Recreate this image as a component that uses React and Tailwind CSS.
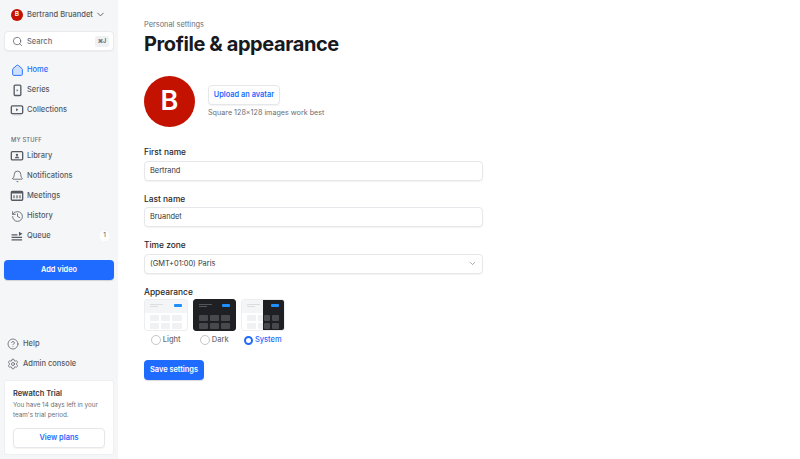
import React from "react";
import { Home, Search, Bell, History, Settings, CircleHelp, ChevronDown } from "lucide-react";

const FONT = { fontFamily: "Inter, sans-serif" };

function SeriesIcon() {
  return (
    <svg width="15" height="15" viewBox="0 0 18 18" fill="none">
      <rect x="5" y="2.5" width="8" height="12.5" rx="1.2" stroke="#565a62" strokeWidth="1.6" />
      <path d="M8 7.4l2 1.4-2 1.4z" fill="#565a62" />
    </svg>
  );
}

function CollectionsIcon() {
  return (
    <svg width="14" height="14" viewBox="0 0 18 18" fill="none">
      <rect x="1.7" y="3.6" width="14.6" height="10" rx="1.4" stroke="#565a62" strokeWidth="1.7" />
      <path d="M7.8 6.9l3 1.8-3 1.8z" fill="#565a62" />
      <path d="M3.5 15.2h11" stroke="#b9bcc2" strokeWidth="1.2" />
    </svg>
  );
}

function LibraryIcon() {
  return (
    <svg width="14" height="14" viewBox="0 0 18 18" fill="none">
      <rect x="1.7" y="3.4" width="14.6" height="10.6" rx="1.4" stroke="#565a62" strokeWidth="1.7" />
      <circle cx="9" cy="7.6" r="1.5" fill="#565a62" />
      <path d="M6.1 12c.4-1.6 1.5-2.2 2.9-2.2s2.5.6 2.9 2.2z" fill="#565a62" />
    </svg>
  );
}

function MeetingsIcon() {
  return (
    <svg width="14" height="14" viewBox="0 0 18 18" fill="none">
      <rect x="1.7" y="3" width="14.6" height="11.5" rx="1.2" stroke="#565a62" strokeWidth="1.7" />
      <rect x="2" y="3.2" width="14" height="2.6" fill="#565a62" />
      <path d="M3.8 8h2.7v4H3.8zM7.7 8h2.7v4H7.7zM11.5 8h2.7v4h-2.7z" fill="#9a9da3" />
    </svg>
  );
}

function QueueIcon() {
  return (
    <svg width="14" height="14" viewBox="0 0 18 18" fill="none">
      <path d="M2 7.5h7.5M2 10.8h13.5M2 14h13.5" stroke="#565a62" strokeWidth="1.6" />
      <path d="M11.5 3.4l4.5 2.8-4.5 2.8z" fill="#565a62" />
    </svg>
  );
}

function NavRow({ icon, label, active, badge }) {
  return (
    <div className="h-5 flex items-center pl-2 pr-[9px] shrink-0">
      <span className="w-[18px] h-[18px] flex items-center justify-center shrink-0">{icon}</span>
      <span className={`ml-[1px] text-[7.5px] font-medium ${active ? "text-[#1f6bff]" : "text-[#565a62]"}`}>{label}</span>
      {badge && (
        <span className="ml-auto w-[9px] h-[10px] bg-white rounded-sm flex items-center justify-center text-[6.5px] text-[#565a62]">{badge}</span>
      )}
    </div>
  );
}

function ThemeThumb({ mode }) {
  const dark = mode === "dark";
  const head = dark ? "bg-[#1f2023]" : "bg-[#f4f5f7]";
  const body = dark ? "bg-[#1f2023]" : "bg-white";
  const cell = dark ? "bg-[#48494d]" : "bg-[#f0f1f3]";
  const line = dark ? "bg-[#55565a]" : "bg-[#dcdde0]";

  if (mode === "system") {
    return (
      <div className="relative w-full h-[32px] rounded-[3px] overflow-hidden border border-[#eceef0] bg-white">
        <div className="h-[13px] bg-[#f4f5f7] px-[5px] pt-1">
          <div className="w-[13px] h-px bg-[#dcdde0]" />
          <div className="w-[8px] h-px mt-px bg-[#dcdde0]" />
        </div>
        <div className="grid grid-cols-3 gap-[2px] px-[5px] pt-[2px]">
          {[0, 1, 2, 3, 4, 5].map((i) => (
            <div key={i} className="h-[6px] rounded-[1px] bg-[#f0f1f3]" />
          ))}
        </div>
        <div className="absolute top-0 right-0 bottom-0 w-[21px] bg-[#1f2023]">
          <div className="absolute top-[4px] right-[5px] w-[8px] h-[3px] bg-[#1f8fff] rounded-[1px]" />
          <div className="grid grid-cols-2 gap-[2px] pl-[1px] pr-[5px] pt-[15px]">
            {[0, 1, 2, 3].map((i) => (
              <div key={i} className="h-[6px] rounded-[1px] bg-[#48494d]" />
            ))}
          </div>
        </div>
      </div>
    );
  }

  return (
    <div className={`relative w-full h-[32px] rounded-[3px] overflow-hidden border ${dark ? "border-[#1f2023]" : "border-[#eceef0]"} ${body}`}>
      <div className={`h-[13px] ${head} px-[5px] pt-1`}>
        <div className={`w-[13px] h-px ${line}`} />
        <div className={`w-[8px] h-px mt-px ${line}`} />
      </div>
      <div className="absolute top-[4px] right-[5px] w-[8px] h-[3px] bg-[#1f8fff] rounded-[1px]" />
      <div className="grid grid-cols-3 gap-[2px] px-[5px] pt-[2px]">
        {[0, 1, 2, 3, 4, 5].map((i) => (
          <div key={i} className={`h-[6px] rounded-[1px] ${cell}`} />
        ))}
      </div>
    </div>
  );
}

function ThemeOption({ mode, label, selected }) {
  return (
    <div className="w-[43.5px] flex flex-col items-center">
      <ThemeThumb mode={mode} />
      <div className="mt-[3px] h-[12px] flex items-center">
        {selected ? (
          <span className="w-[9px] h-[9px] rounded-full border-[2.5px] border-[#1f6bff] bg-white shrink-0" />
        ) : (
          <span className="w-[10px] h-[10px] rounded-full border border-[#c4c6ca] bg-white shrink-0" />
        )}
        <span className={`ml-[2px] text-[7.5px] font-medium ${selected ? "text-[#1f6bff]" : "text-[#6b6e75]"}`}>{label}</span>
      </div>
    </div>
  );
}

function Field({ label, value, select }) {
  return (
    <div className="mb-[13px]">
      <div className="h-[11px] flex items-center text-[8.4px] font-medium text-[#26282c] mb-[2.5px]">{label}</div>
      <div className="h-[20px] w-[339px] bg-white border border-[#e6e7ea] rounded-[4px] shadow-[0_1px_1px_rgba(0,0,0,0.05)] flex items-center px-[5px] text-[7.4px] text-[#33363b]">
        <span>{value}</span>
        {select && <ChevronDown size={9} className="ml-auto mr-[0px] text-[#8a8d93]" />}
      </div>
    </div>
  );
}

export default function App() {
  return (
    <div style={FONT} className="w-[800px] h-[459px] overflow-hidden flex bg-white">
      {/* Sidebar */}
      <div className="w-[118px] h-full bg-[#f5f6f8] flex flex-col shrink-0 px-[4px]">
        <div className="h-[29px] mb-[2px] shrink-0 flex items-center pl-[7px] pr-[8px]">
          <span className="w-3 h-3 rounded-full bg-[#c41200] text-white text-[6.5px] font-semibold flex items-center justify-center">B</span>
          <span className="ml-[4px] text-[7.5px] font-medium text-[#565a62] whitespace-nowrap">Bertrand Bruandet</span>
          <ChevronDown size={11} className="ml-auto text-[#565a62]" />
        </div>
        <div className="h-[20px] shrink-0 bg-white rounded-[4px] border border-[#e9eaed] shadow-[0_1px_1px_rgba(0,0,0,0.04)] flex items-center pl-[7px] pr-[4px]">
          <Search size={11} className="text-[#565a62]" strokeWidth={1.6} />
          <span className="ml-[4px] pt-px text-[7.5px] font-medium text-[#6b6e75]">Search</span>
          <span className="ml-auto w-[14px] h-[11px] rounded-[2px] bg-[#f0f1f3] text-[5.5px] font-semibold text-[#565a62] flex items-center justify-center">⌘J</span>
        </div>

        <div className="mt-[9px] -mx-[4px]">
          <NavRow active label="Home" icon={<Home size={13} strokeWidth={1.7} className="text-[#1f6bff]" fill="#cfe0ff" />} />
          <NavRow label="Series" icon={<SeriesIcon />} />
          <NavRow label="Collections" icon={<CollectionsIcon />} />
        </div>

        <div className="mt-[15px] pl-[7px] h-[10px] shrink-0 flex items-center text-[5.8px] font-medium tracking-[0.03em] text-[#6b6e75]">MY STUFF</div>
        <div className="mt-[1px] -mx-[4px]">
          <NavRow label="Library" icon={<LibraryIcon />} />
          <NavRow label="Notifications" icon={<Bell size={13} strokeWidth={1.5} className="text-[#565a62]" />} />
          <NavRow label="Meetings" icon={<MeetingsIcon />} />
          <NavRow label="History" icon={<History size={13} strokeWidth={1.5} className="text-[#565a62]" />} />
          <NavRow label="Queue" badge="1" icon={<QueueIcon />} />
        </div>

        <div className="mt-[14px] h-[20px] shrink-0 rounded-[4px] bg-[#1f6bff] shadow-[0_1px_1px_rgba(0,0,0,0.15)] flex items-center justify-center text-[7.4px] font-semibold text-white">Add video</div>

        <div className="mt-auto">
          <div className="flex items-center h-[20px] pl-[3px]">
            <CircleHelp size={12} strokeWidth={1.5} className="text-[#565a62]" />
            <span className="ml-[4px] text-[7.5px] font-medium text-[#565a62]">Help</span>
          </div>
          <div className="flex items-center h-[20px] pl-[3px]">
            <Settings size={12} strokeWidth={1.5} className="text-[#565a62]" />
            <span className="ml-[4px] text-[7.5px] font-medium text-[#565a62]">Admin console</span>
          </div>
          <div className="mt-[6px] mb-[4px] bg-white rounded-[3px] border border-[#eeeff1] px-[8px] pt-[7px] h-[75px]">
            <div className="text-[7.5px] font-semibold text-[#33363b] leading-[12px]">Rewatch Trial</div>
            <div className="text-[6.3px] text-[#6b6e75] leading-[10px]">You have 14 days left in your team's trial period.</div>
            <div className="mt-[8px] h-[20px] bg-white rounded-[4px] border border-[#e6e7ea] shadow-[0_1px_1px_rgba(0,0,0,0.05)] flex items-center justify-center text-[7.4px] font-semibold text-[#1f6bff]">View plans</div>
          </div>
        </div>
      </div>

      {/* Main */}
      <div className="flex-1 pl-[26px] pt-[19px]">
        <div className="text-[7.4px] text-[#6b6e75] leading-[12px]">Personal settings</div>
        <h1 className="mt-[1px] text-[20px] font-bold tracking-[-0.02em] text-[#17191d] leading-[24px]">Profile &amp; appearance</h1>

        <div className="mt-[20px] flex items-start">
          <div className="w-[51px] h-[51px] rounded-full bg-[#c41200] text-white text-[27px] font-semibold flex items-center justify-center">B</div>
          <div className="ml-[13px] mt-[9px]">
            <div className="h-[20px] w-[72px] bg-white rounded-[4px] border border-[#e6e7ea] shadow-[0_1px_1px_rgba(0,0,0,0.05)] flex items-center justify-center text-[7.4px] font-semibold text-[#1f6bff]">Upload an avatar</div>
            <div className="mt-[2px] text-[7.2px] text-[#6b6e75] leading-[12px]">Square 128x128 images work best</div>
          </div>
        </div>

        <div className="mt-[20px]">
          <Field label="First name" value="Bertrand" />
          <Field label="Last name" value="Bruandet" />
          <Field label="Time zone" value="(GMT+01:00) Paris" select />
        </div>

        <div className="h-[11px] flex items-center text-[8.4px] font-medium text-[#26282c] mb-[1.5px] mt-[2px]">Appearance</div>
        <div className="flex gap-[5px]">
          <ThemeOption mode="light" label="Light" />
          <ThemeOption mode="dark" label="Dark" />
          <ThemeOption mode="system" label="System" selected />
        </div>

        <div className="mt-[14px] h-[20px] w-[60px] rounded-[4px] bg-[#1f6bff] shadow-[0_1px_1px_rgba(0,0,0,0.15)] flex items-center justify-center text-[7.4px] font-semibold text-white">Save settings</div>
      </div>
    </div>
  );
}
